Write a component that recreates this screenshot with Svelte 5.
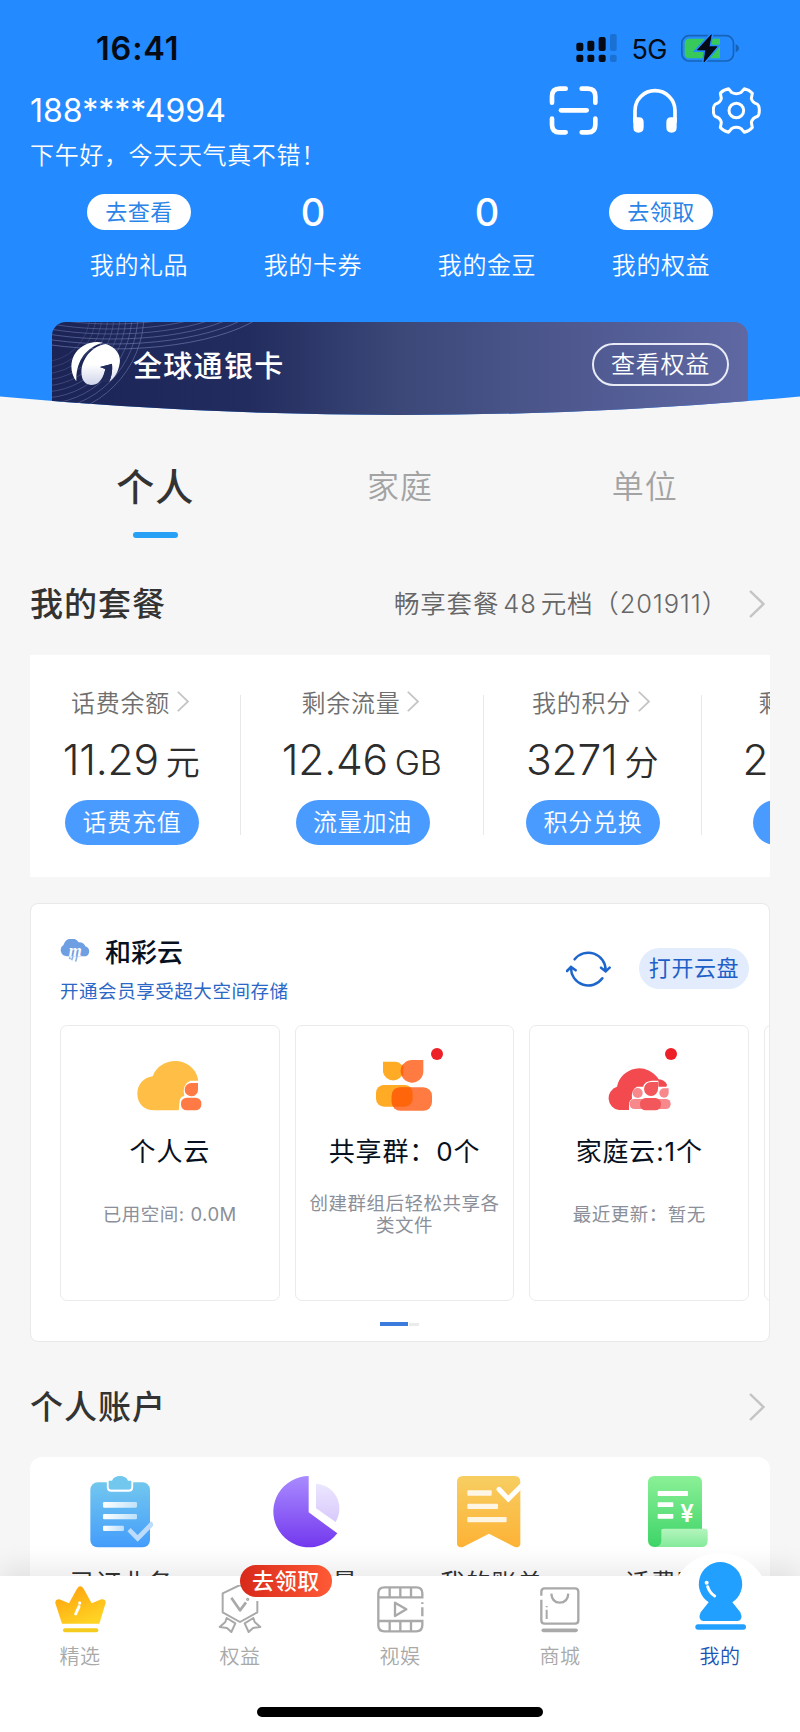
<script lang="ts">
    type Stat = { label: string; count?: number; action?: string };
    type Usage = { title: string; value: string; unit: string; action: string; width: number };
    type Cloud = { icon: string; title: string; note: string; dot: boolean };

    const stats: Stat[] = [
        { label: '我的礼品', action: '去查看' },
        { label: '我的卡券', count: 0 },
        { label: '我的金豆', count: 0 },
        { label: '我的权益', action: '去领取' }
    ];

    const tabs = ['个人', '家庭', '单位'];
    let activeTab = $state(0);

    const usages: Usage[] = [
        { title: '话费余额', value: '11.29', unit: '元', action: '话费充值', width: 218 },
        { title: '剩余流量', value: '12.46', unit: 'GB', action: '流量加油', width: 243 },
        { title: '我的积分', value: '3271', unit: '分', action: '积分兑换', width: 218 },
        { title: '剩余语音', value: '200', unit: '分钟', action: '语音加油', width: 235 }
    ];

    const clouds: Cloud[] = [
        { icon: 'personal', title: '个人云', note: '已用空间: 0.0M', dot: false },
        { icon: 'group', title: '共享群：0个', note: '创建群组后轻松共享各类文件', dot: true },
        { icon: 'family', title: '家庭云:1个', note: '最近更新：暂无', dot: true }
    ];

    const accounts = [
        { icon: 'orders', label: '已订业务' },
        { icon: 'remain', label: '套餐余量' },
        { icon: 'bill', label: '我的账单' },
        { icon: 'invoice', label: '话费账单' }
    ];

    const navs = [
        { icon: 'crown', label: '精选' },
        { icon: 'medal', label: '权益', badge: '去领取' },
        { icon: 'film', label: '视娱' },
        { icon: 'bag', label: '商城' },
        { icon: 'me', label: '我的', active: true }
    ];

    const rings = [0, 1, 2, 3, 4, 5, 6, 7, 8, 9];
</script>

{#snippet chevron(w: number, h: number)}
    <svg class="chevron" width={w} height={h} viewBox="0 0 15 28" preserveAspectRatio="none">
        <path d="M1 1 L13.5 14 L1 27" fill="none" stroke="#c4c4c4" stroke-width="2.4" />
    </svg>
{/snippet}

<div class="page">
    <header class="header">
        <div class="status">
            <span class="time">16:41</span>
            <div class="status-right">
                <svg width="41" height="29" viewBox="0 0 123 87">
                    <g fill="#050a14">
                        <rect x="1" y="26" width="21" height="25" rx="6" />
                        <rect x="34" y="20" width="21" height="31" rx="6" />
                        <rect x="68" y="9" width="21" height="42" rx="6" />
                        <rect x="1" y="62" width="21" height="22" rx="6" />
                        <rect x="34" y="62" width="21" height="22" rx="6" />
                        <rect x="68" y="62" width="21" height="22" rx="6" />
                    </g>
                    <g fill="#1b70d3">
                        <rect x="102" y="0" width="20" height="51" rx="6" />
                        <rect x="102" y="62" width="20" height="22" rx="6" />
                    </g>
                </svg>
                <span class="network">5G</span>
                <svg width="58" height="29" viewBox="0 0 174 87">
                    <rect x="2.500" y="5" width="155" height="76" rx="22" fill="none" stroke="#1763b8" stroke-width="5" />
                    <path d="M164 31 Q174 35 174 43 Q174 51 164 55Z" fill="#1763b8" />
                    <path d="M25 14 H117 V73 H25 Q11 73 11 59 V28 Q11 14 25 14Z" fill="#37c95a" />
                    <path d="M91 2 L49 48 H74 L69 84 L108 38 H84Z" fill="#050a14" stroke="#248aff" stroke-width="12" paint-order="stroke" />
                    <path d="M91 2 L49 48 H74 L69 84 L108 38 H84Z" fill="#050a14" stroke="#050a14" stroke-width="2" stroke-linejoin="round" />
                </svg>
            </div>
        </div>

        <div class="user">
            <div class="user-text">
                <div class="phone">188****4994</div>
                <div class="greeting">下午好，今天天气真不错！</div>
            </div>
            <div class="tools">
                <svg width="49" height="49" viewBox="0 0 147 147" fill="none" stroke="#fff" stroke-width="14" stroke-linecap="round">
                    <path d="M9 50 V31 Q9 8 32 8 H50 M98 8 H116 Q139 8 139 31 V50 M139 98 V116 Q139 139 116 139 H98 M50 139 H32 Q9 139 9 116 V98" />
                    <path d="M36 73 H113" />
                </svg>
                <svg width="44" height="46" viewBox="0 0 132 138">
                    <path d="M6 104 V68 A60 60 0 0 1 126 68 V104" fill="none" stroke="#fff" stroke-width="11" />
                    <path d="M1 88 H18 Q32 88 32 103 V118 Q32 134 16 134 Q1 134 1 118Z M131 88 H114 Q100 88 100 103 V118 Q100 134 116 134 Q131 134 131 118Z" fill="#fff" />
                </svg>
                <svg width="49" height="47" viewBox="0 0 147 140" fill="none" stroke="#fff" stroke-width="9" stroke-linejoin="round">
                    <path d="M50 5 L59 16 Q73 23 87 16 L97 5 Q112 8 121 18 L118 34 Q121 47 136 51 Q142 55 142 70 Q142 84 136 88 Q121 92 118 106 L121 121 Q112 132 97 135 L87 124 Q73 117 59 124 L50 135 Q34 132 25 121 L28 106 Q25 92 10 88 Q4 84 4 70 Q4 55 10 51 Q25 47 28 34 L25 18 Q34 8 50 5Z" />
                    <circle cx="73" cy="70" r="22" />
                </svg>
            </div>
        </div>

        <div class="stats">
            {#each stats as stat}
                <div class="stat">
                    <div class="stat-top">
                        {#if stat.action}
                            <button class="stat-pill">{stat.action}</button>
                        {:else}
                            <span class="stat-count">{stat.count}</span>
                        {/if}
                    </div>
                    <div class="stat-label">{stat.label}</div>
                </div>
            {/each}
        </div>

        <div class="bank">
            <svg class="bank-lines" width="260" height="94" viewBox="0 0 260 94" fill="none" stroke="#7684bb" stroke-width="1">
                {#each rings as i}
                    <circle cx="-10" cy="-8" r={48 + i * 6} opacity={0.25 + i * 0.03} />
                    <ellipse cx="60" cy="-30" rx={165 - i * 11} ry={57 - i * 5} opacity={0.6 - i * 0.03} />
                {/each}
            </svg>
            <div class="bank-row">
                <svg width="49" height="44" viewBox="0 0 147 132">
                    <defs>
                        <linearGradient id="logo" x1="0" y1="0" x2="0" y2="1">
                            <stop offset="0.5" stop-color="#fff" />
                            <stop offset="1" stop-color="#cfd4ea" />
                        </linearGradient>
                    </defs>
                    <path d="M16 118 C-8 86 -4 36 36 12 C54 0 78 -2 96 2 C50 14 14 52 16 118Z" fill="#fff" />
                    <path d="M32 100 C26 58 60 12 104 6 C138 16 150 42 146 64 C142 90 132 108 114 120 C122 104 125 86 123 66 L86 75 L103 81 C99 98 92 115 80 124 C62 134 36 130 32 100Z" fill="url(#logo)" />
                    <path d="M88 75 L123 65 C125 86 122 104 114 120 L88 122 C97 110 101 94 103 81Z" fill="#222b5e" />
                </svg>
                <span class="bank-name">全球通银卡</span>
                <button class="bank-button">查看权益</button>
            </div>
        </div>
    </header>

    <main class="content">
        <nav class="tabs">
            {#each tabs as tab, i}
                <button class="tab" class:active={activeTab === i} onclick={() => (activeTab = i)}>{tab}</button>
            {/each}
        </nav>

        <div class="section-head">
            <h2>我的套餐</h2>
            <span class="plan">畅享套餐 48 元档（201911）</span>
            {@render chevron(16, 28)}
        </div>

        <section class="usages">
            {#each usages as usage}
                <div class="usage" style="width: {usage.width}px">
                    <div class="usage-title">{usage.title}{@render chevron(12, 21)}</div>
                    <div class="usage-value">
                        <span class="number">{usage.value}</span>
                        <span class="unit">{usage.unit}</span>
                    </div>
                    <button class="usage-button">{usage.action}</button>
                </div>
            {/each}
        </section>

        <section class="cloud">
            <div class="cloud-head">
                <div class="cloud-text">
                    <div class="cloud-title">
                        <svg width="31" height="24" viewBox="0 0 93 72">
                            <path d="M20 52 A19 19 0 0 1 11 17 A25 25 0 0 1 56 10 A20 20 0 0 1 76 22 A16 16 0 0 1 78 52Z" fill="#6f9fe3" />
                            <text x="26" y="52" font-family="Liberation Serif" font-style="italic" font-weight="bold" font-size="50" fill="#fff">m</text>
                            <path d="M52 48 L47 68 M27 56 L32 59 M39 52 L35 64" stroke="#8db4ea" stroke-width="5" />
                        </svg>
                        <span>和彩云</span>
                    </div>
                    <div class="cloud-sub">开通会员享受超大空间存储</div>
                </div>
                <svg class="refresh" width="45" height="37" viewBox="0 0 135 111" fill="none" stroke="#1f66cc" stroke-width="7.500" stroke-linecap="round">
                    <path d="M26 28 A52 52 0 0 1 119 60 M105 53 L119 64 L131 53" />
                    <path d="M109 85 A52 52 0 0 1 15 52 M3 63 L15 51 L29 61" />
                </svg>
                <button class="open">打开云盘</button>
            </div>

            <div class="cloud-cards">
                {#each clouds as cloud}
                    <div class="cloud-card">
                        <div class="cloud-icon">
                            {#if cloud.icon === 'personal'}
                                <svg width="66" height="50" viewBox="0 0 198 150">
                                    <path d="M56 148 C24 148 4 127 4 98 C4 70 24 49 50 46 C61 16 89 0 118 0 C156 0 187 30 187 64 V148Z" fill="#ffbe45" />
                                    <path d="M128 150 L131 118 Q133 108 145 104 Q137 70 163 59 H198 V150Z" fill="#fff" />
                                    <path d="M186 66 V84 A20 20 0 1 1 166 66Z" fill="#ff7a45" />
                                    <rect x="135" y="110" width="61" height="38" rx="17" fill="#ff7a45" />
                                </svg>
                            {:else if cloud.icon === 'group'}
                                <svg width="56" height="51" viewBox="0 0 168 153">
                                    <path d="M21 5 H60 Q82 8 82 36 A31 31 0 0 1 21 36Z" fill="#ffab26" />
                                    <rect x="0" y="75" width="110" height="65" rx="24" fill="#ffab26" />
                                    <path d="M142 0 V36 A34 34 0 1 1 108 0Z" fill="#ff7b42" />
                                    <rect x="47" y="82" width="121" height="70" rx="26" fill="#ff7b42" />
                                    <path d="M74 36 Q74 18 82 12 V48 Q76 48 74 36Z M73 82 H102 Q110 88 110 102 V118 Q108 138 86 140 H52 Q47 134 47 126 V108 Q47 84 73 82Z" fill="#ff650a" />
                                </svg>
                            {:else}
                                <svg width="64" height="45" viewBox="0 0 192 135">
                                    <path d="M36 132 A36 36 0 0 1 30 62 A68 68 0 0 1 155 40 Q174 42 180 56 L178 64 L66 132Z" fill="#f24a4f" />
                                    <path d="M66 135 V112 Q68 102 75 98 Q72 70 90 62 H108 Q112 46 134 44 H154 V62 H192 V135Z" fill="#fff" />
                                    <circle cx="92" cy="81" r="15" fill="#f7898d" />
                                    <path d="M185 67 V81 A14 14 0 1 1 171 67Z" fill="#f7898d" />
                                    <rect x="68" y="99" width="60" height="30" rx="14" fill="#f7898d" />
                                    <rect x="132" y="99" width="59" height="30" rx="14" fill="#f7898d" />
                                    <path d="M153 48 V68 A21 21 0 1 1 132 48Z" fill="#f2575b" />
                                    <rect x="99" y="96" width="63" height="37" rx="17" fill="#f2575b" />
                                </svg>
                            {/if}
                            {#if cloud.dot}
                                <span class="dot"></span>
                            {/if}
                        </div>
                        <div class="cloud-name">{cloud.title}</div>
                        <div class="cloud-note">{cloud.note}</div>
                    </div>
                {/each}
                <div class="cloud-card"></div>
            </div>

            <div class="pager"><span></span><i></i></div>
        </section>

        <div class="section-head">
            <h2>个人账户</h2>
            {@render chevron(16, 28)}
        </div>

        <section class="accounts">
            {#each accounts as account}
                <div class="account">
                    <div class="account-icon {account.icon}">
                        {#if account.icon === 'orders'}
                            <svg width="63" height="72" viewBox="0 0 189 216">
                                <defs>
                                    <linearGradient id="blue" x1="0" y1="0" x2="0" y2="1">
                                        <stop offset="0" stop-color="#72c7ee" />
                                        <stop offset="1" stop-color="#449dfb" />
                                    </linearGradient>
                                    <linearGradient id="line" x1="0" y1="0" x2="1" y2="0">
                                        <stop offset="0" stop-color="#fff" />
                                        <stop offset="1" stop-color="#fff" stop-opacity="0.6" />
                                    </linearGradient>
                                </defs>
                                <rect x="1" y="19" width="179" height="195" rx="22" fill="url(#blue)" />
                                <path d="M54 12 H126 V34 Q126 44 116 44 H64 Q54 44 54 34Z" fill="#76c9ee" stroke="#fff" stroke-width="7" />
                                <path d="M56 14 H66 Q72 0 90 0 Q108 0 114 14 H124 V33 Q124 40 116 40 H64 Q56 40 56 33Z" fill="#72c7ee" />
                                <rect x="39" y="78" width="102" height="17" rx="4" fill="url(#line)" />
                                <rect x="39" y="114" width="102" height="16" rx="4" fill="url(#line)" />
                                <rect x="39" y="149" width="63" height="16" rx="4" fill="url(#line)" />
                                <path d="M122 166 L143 187 L183 146" fill="none" stroke="#bddcfb" stroke-width="14" stroke-linecap="square" />
                            </svg>
                        {:else if account.icon === 'remain'}
                            <svg width="67" height="72" viewBox="0 0 201 216">
                                <defs>
                                    <linearGradient id="violet" x1="0" y1="0" x2="0" y2="1">
                                        <stop offset="0" stop-color="#a98bff" />
                                        <stop offset="1" stop-color="#7338ee" />
                                    </linearGradient>
                                    <linearGradient id="pale" x1="0" y1="0" x2="0" y2="1">
                                        <stop offset="0" stop-color="#ece6ff" />
                                        <stop offset="1" stop-color="#d9c9fb" />
                                    </linearGradient>
                                </defs>
                                <path d="M107 0 V109 L193 172 A107 107 0 1 1 107 0Z" fill="url(#violet)" />
                                <path d="M129 23 Q178 28 195 72 Q206 104 188 138 L129 97Z" fill="url(#pale)" />
                            </svg>
                        {:else if account.icon === 'bill'}
                            <svg width="64" height="72" viewBox="0 0 192 216">
                                <defs>
                                    <linearGradient id="gold" x1="0" y1="0" x2="0" y2="1">
                                        <stop offset="0" stop-color="#f7ce62" />
                                        <stop offset="1" stop-color="#fdb235" />
                                    </linearGradient>
                                </defs>
                                <path d="M18 0 H174 Q190 0 190 18 V205 Q187 216 174 213 L96 173 L18 213 Q3 216 0 205 V18 Q0 0 18 0Z" fill="url(#gold)" />
                                <path d="M126 40 L154 69 L196 27" fill="none" stroke="#fff" stroke-width="15" stroke-linecap="round" />
                                <g fill="#fff" opacity="0.85">
                                    <rect x="31" y="43" width="73" height="16" rx="3" />
                                    <rect x="31" y="83" width="92" height="16" rx="3" />
                                    <rect x="31" y="123" width="118" height="16" rx="3" />
                                </g>
                            </svg>
                        {:else}
                            <svg width="60" height="72" viewBox="0 0 180 216">
                                <defs>
                                    <linearGradient id="green" x1="0" y1="0" x2="0" y2="1">
                                        <stop offset="0" stop-color="#8bf096" />
                                        <stop offset="1" stop-color="#3dd468" />
                                    </linearGradient>
                                    <linearGradient id="mint" x1="0" y1="0" x2="0" y2="1">
                                        <stop offset="0" stop-color="#b3f5bd" />
                                        <stop offset="1" stop-color="#84ea9a" />
                                    </linearGradient>
                                </defs>
                                <path d="M20 0 H142 Q162 0 162 20 V176 H42 V213 H20 Q0 213 0 193 V20 Q0 0 20 0Z" fill="url(#green)" />
                                <path d="M40 162 Q40 158 50 158 H172 Q179 158 179 166 V194 Q178 213 160 213 H22 Q40 211 40 192Z" fill="url(#mint)" />
                                <rect x="29" y="45" width="91" height="15" rx="2" fill="#fff" />
                                <rect x="29" y="79" width="47" height="14" rx="2" fill="#fff" />
                                <rect x="29" y="114" width="47" height="14" rx="2" fill="#fff" />
                                <text x="117" y="139" text-anchor="middle" font-family="Inter" font-weight="600" font-size="72" fill="#fff">¥</text>
                            </svg>
                        {/if}
                    </div>
                    <div class="account-label">{account.label}</div>
                </div>
            {/each}
        </section>
    </main>

    <footer class="navbar">
        <div class="navs">
            {#each navs as nav}
                <div class="nav" class:active={nav.active}>
                    <div class="nav-icon">
                        {#if nav.icon === 'crown'}
                            <svg width="51" height="47" viewBox="0 0 153 141">
                                <defs>
                                    <linearGradient id="crown" x1="0" y1="0" x2="0.6" y2="1">
                                        <stop offset="0" stop-color="#ff9d0a" />
                                        <stop offset="1" stop-color="#ffd324" />
                                    </linearGradient>
                                </defs>
                                <path d="M21 113 L1 52 Q0 40 13 40 L42 52 L66 8 Q76 -6 86 8 L110 52 L139 40 Q153 39 152 51 L133 113Z" fill="url(#crown)" />
                                <rect x="24" y="127" width="106" height="12" rx="6" fill="#f5cc1d" />
                                <path d="M72 62 L62 84 M74 50 V52" stroke="#fff" stroke-width="9" stroke-linecap="round" />
                            </svg>
                        {:else if nav.icon === 'medal'}
                            <svg width="44" height="48" viewBox="0 0 132 144" fill="none" stroke="#a9a9a9" stroke-width="6" stroke-linejoin="round">
                                <path d="M118 48 V82 L66 111 L14 82 V25 L66 0 L88 10" />
                                <path d="M40 38 L66 76 L84 52" stroke-width="8" />
                                <circle cx="89" cy="43" r="2" />
                                <path d="M26 99 L52 115 L40 141 L27 129 L5 126 L22 111Z M106 99 L80 115 L92 141 L105 129 L127 126 L110 111Z" />
                            </svg>
                        {:else if nav.icon === 'film'}
                            <svg width="47" height="47" viewBox="0 0 141 141" fill="none" stroke="#a9a9a9" stroke-width="7">
                                <path d="M136 91 V64 M136 54 V49" />
                                <path d="M4 34 H136 V22 Q136 4 118 4 H22 Q4 4 4 22 V118 Q4 136 22 136 H118 Q136 136 136 118 V105 H4" />
                                <path d="M38 5 V34 M70 5 V34 M102 5 V34 M38 105 V136 M70 105 V136 M102 105 V136" />
                                <path d="M54 50 L88 70 L54 90Z" stroke-linejoin="round" />
                            </svg>
                        {:else if nav.icon === 'bag'}
                            <svg width="40" height="46" viewBox="0 0 120 138" fill="none" stroke="#a9a9a9" stroke-width="7">
                                <path d="M4 26 V14 Q4 4 14 4 H105 Q115 4 115 14 V100 Q115 110 105 110 H14 Q4 110 4 100 V38" />
                                <path d="M34 20 Q36 47 59 47 Q83 47 85 20" />
                                <path d="M20 68 V96 M20 57 V61" stroke-width="6" />
                                <path d="M10 130 H108" stroke-width="11" stroke-linecap="round" />
                            </svg>
                        {:else}
                            <svg width="51" height="68" viewBox="0 0 153 204">
                                <path d="M76 0 A66 66 0 0 1 112 121 L136 151 Q146 175 128 177 H25 Q7 175 17 151 L41 121 A66 66 0 0 1 76 0Z" fill="#21a0ff" />
                                <rect x="1" y="187" width="152" height="16" rx="8" fill="#21a0ff" />
                                <path d="M38 74 Q44 93 59 102" fill="none" stroke="#fff" stroke-width="9" stroke-linecap="round" />
                                <circle cx="35" cy="62" r="6" fill="#fff" />
                            </svg>
                        {/if}
                        {#if nav.badge}
                            <span class="nav-badge">{nav.badge}</span>
                        {/if}
                    </div>
                    <div class="nav-label">{nav.label}</div>
                </div>
            {/each}
        </div>
        <div class="home-bar"></div>
    </footer>
</div>

<style>
    :global(body) {
        margin: 0;
        background: #f6f6f6;
    }

    .page {
        display: flex;
        flex-direction: column;
        width: 800px;
        height: 1732px;
        overflow: hidden;
        background: #f6f6f6;
        color: #333;
        font-family: Inter, "Noto Sans CJK SC", sans-serif;
    }

    button {
        padding: 0;
        border: none;
        background: none;
        font-family: inherit;
        white-space: nowrap;
    }

    svg {
        display: block;
        flex: none;
    }

    /* header */
    .header {
        flex: none;
        height: 416px;
        background: #248aff;
        color: #fff;
        clip-path: path("M0 0 H800 V396.5 Q400 433.5 0 396.5 Z");
    }

    .status {
        display: flex;
        justify-content: space-between;
        align-items: center;
        box-sizing: border-box;
        height: 80px;
        padding: 16px 61px 0 96px;
        color: #050a14;
    }

    .time {
        font-size: 32.500px;
        font-weight: 600;
        letter-spacing: 0.8px;
    }

    .status-right {
        display: flex;
        align-items: center;
    }

    .network {
        margin: 2px 14px 0 14px;
        font-size: 27px;
        letter-spacing: -0.5px;
    }

    .user {
        display: flex;
        justify-content: space-between;
        height: 88px;
        padding: 6px 39px 0 30px;
    }

    .phone {
        margin-top: 5px;
        font-size: 32px;
        line-height: 40px;
    }

    .greeting {
        margin-top: 5px;
        font-size: 24px;
        line-height: 40px;
        letter-spacing: 0.65px;
        font-weight: 350;
    }

    .tools {
        display: flex;
        align-items: center;
        gap: 35px;
        height: 49px;
    }

    .stats {
        display: flex;
        margin: 20px 52px 0;
    }

    .stat {
        flex: 1;
        text-align: center;
    }

    .stat-top {
        display: flex;
        justify-content: center;
        align-items: center;
        height: 36px;
    }

    .stat-pill {
        width: 104px;
        height: 36px;
        border-radius: 18px;
        background: #fff;
        color: #2b84e8;
        font-size: 22px;
        line-height: 36px;
        letter-spacing: 0.5px;
    }

    .stat-count {
        font-size: 38px;
        font-weight: 500;
    }

    .stat-label {
        margin-top: 16px;
        font-size: 24px;
        line-height: 40px;
        letter-spacing: 0.6px;
        font-weight: 350;
    }

    .bank {
        display: grid;
        height: 94px;
        margin: 36px 52px 0;
        border-radius: 14px 14px 0 0;
        background: linear-gradient(90deg, #1c2456 0%, #222c5e 28%, #3b4878 50%, #4f5990 75%, #5f68a2 100%);
        overflow: hidden;
    }

    .bank-lines,
    .bank-row {
        grid-area: 1 / 1;
    }

    .bank-row {
        display: flex;
        align-items: center;
        height: 84px;
        padding: 0 19px;
    }

    .bank-name {
        flex: 1;
        margin-left: 13px;
        font-size: 29px;
        font-weight: 500;
        letter-spacing: 1.3px;
    }

    .bank-button {
        box-sizing: border-box;
        width: 137px;
        height: 43px;
        border: 2px solid #e8ebf5;
        border-radius: 22px;
        color: #fff;
        font-size: 24px;
        line-height: 39px;
        letter-spacing: 0.7px;
        font-weight: 350;
    }

    /* tabs */
    .content {
        flex: 1;
        min-height: 0;
        overflow: hidden;
    }

    .tabs {
        display: flex;
        padding: 46px 33px 0;
    }

    .tab {
        display: flex;
        flex: 1;
        flex-direction: column;
        align-items: center;
        height: 76.500px;
        color: #a3a3a3;
        font-size: 32px;
        line-height: 50px;
        letter-spacing: 1px;
        font-weight: 350;
    }

    .tab.active {
        color: #333;
        font-size: 38px;
        font-weight: 500;
    }

    .tab.active::after {
        content: "";
        width: 45px;
        height: 6px;
        margin-top: 20px;
        border-radius: 3px;
        background: #27a0f5;
    }

    .section-head {
        display: flex;
        align-items: center;
        height: 60px;
        margin-top: 35.500px;
        padding: 0 35px 0 30px;
    }

    h2 {
        flex: 1;
        margin: -4px 0 0;
        font-size: 33px;
        font-weight: 500;
        letter-spacing: 1px;
    }

    .plan {
        margin: -5px 21px 0 0;
        color: #666;
        font-size: 25.500px;
        letter-spacing: 0.85px;
        word-spacing: -4px;
        font-weight: 350;
    }

    /* balances */
    .usages {
        display: flex;
        box-sizing: border-box;
        width: 740px;
        height: 222.500px;
        margin: 20.500px 30px 0;
        padding-top: 25px;
        background: #fff;
        overflow: hidden;
    }

    .usage {
        position: relative;
        left: -7px;
        display: flex;
        flex: none;
        flex-direction: column;
        align-items: center;
    }

    .usage:not(:last-child)::after {
        content: "";
        position: absolute;
        top: 15px;
        right: 0;
        width: 1.500px;
        height: 140px;
        background: #e8e8e8;
    }

    .usage-title {
        display: flex;
        align-items: center;
        gap: 7px;
        height: 44px;
        margin-right: 4px;
        color: #6f6f6f;
        font-size: 24px;
        letter-spacing: 0.7px;
        font-weight: 350;
    }

    .usage-value {
        display: flex;
        align-items: baseline;
        gap: 7px;
        height: 55px;
        margin: 8px 2px 0 0;
        color: #2d2d2d;
        line-height: 55px;
        white-space: nowrap;
    }

    .number {
        font-size: 42.500px;
        font-weight: 350;
        letter-spacing: -0.2px;
    }

    .unit {
        font-size: 34px;
        letter-spacing: -0.5px;
        font-weight: 350;
    }

    .usage-button {
        width: 134px;
        height: 45px;
        margin-top: 13.500px;
        border-radius: 23px;
        background: #4a9bff;
        color: #fff;
        font-size: 24px;
        line-height: 45px;
        letter-spacing: 0.7px;
        font-weight: 350;
    }

    /* cloud storage */
    .cloud {
        box-sizing: border-box;
        height: 438.500px;
        margin: 26px 30px 0;
        border: 1.500px solid #e9e9e9;
        border-radius: 8px;
        background: #fff;
        overflow: hidden;
    }

    .cloud-head {
        display: flex;
        height: 94px;
        padding: 27px 20px 0 29px;
    }

    .cloud-text {
        flex: 1;
    }

    .cloud-title {
        display: flex;
        align-items: center;
        gap: 14px;
        height: 40px;
        color: #071020;
        font-size: 26px;
        font-weight: 500;
    }

    .cloud-title span {
        margin-top: -2px;
    }

    .cloud-sub {
        margin-top: 2px;
        color: #2b67c6;
        font-size: 18.500px;
        line-height: 36px;
        letter-spacing: 0.55px;
    }

    .refresh {
        margin: 19px 28px 0 0;
    }

    .open {
        width: 110px;
        height: 41px;
        margin-top: 17px;
        border-radius: 21px;
        background: #e2ecfc;
        color: #1f60c8;
        font-size: 22px;
        line-height: 41px;
        letter-spacing: 0.6px;
    }

    .cloud-cards {
        display: flex;
        gap: 15px;
        padding-left: 29px;
    }

    .cloud-card {
        display: flex;
        flex: none;
        flex-direction: column;
        align-items: center;
        box-sizing: border-box;
        width: 219.700px;
        height: 276px;
        border: 1.500px solid #ebebeb;
        border-radius: 7px;
        text-align: center;
    }

    .cloud-icon {
        position: relative;
        display: flex;
        justify-content: center;
        align-items: flex-end;
        width: 100%;
        height: 85px;
    }

    .cloud-icon svg {
        margin-right: 1px;
    }

    .dot {
        position: absolute;
        top: 22px;
        left: 135px;
        width: 12px;
        height: 12px;
        border-radius: 50%;
        background: #ee2027;
    }

    .cloud-name {
        height: 40px;
        margin-top: 21px;
        color: #071020;
        font-size: 26px;
        line-height: 40px;
        letter-spacing: 0.85px;
    }

    .cloud-note {
        display: flex;
        align-items: center;
        justify-content: center;
        width: 194px;
        height: 50px;
        margin-top: 17px;
        color: #8b8f99;
        font-size: 18.500px;
        line-height: 22px;
        letter-spacing: 0.5px;
    }

    .pager {
        display: flex;
        align-items: center;
        justify-content: center;
        gap: 1px;
        margin: 21px 2px 0 0;
    }

    .pager span {
        width: 28px;
        height: 4px;
        background: #3a7bdc;
    }

    .pager i {
        width: 10px;
        height: 3px;
        background: #ebebeb;
    }

    /* account shortcuts */
    .accounts {
        display: flex;
        height: 200px;
        margin: 20px 30px 0;
        border-radius: 12px;
        background: #fff;
    }

    .account {
        display: flex;
        flex: 1;
        flex-direction: column;
        align-items: center;
        padding-top: 19px;
    }

    .account-icon.orders,
    .account-icon.remain {
        margin-right: 2px;
    }

    .account-icon.bill {
        margin-right: 8px;
    }

    .account-label {
        margin: 15px 2px 0 0;
        font-size: 25px;
        line-height: 40px;
        letter-spacing: 0.8px;
    }

    /* bottom bar */
    .navbar {
        position: relative;
        z-index: 1;
        flex: none;
        height: 156px;
        background: #fff;
        box-shadow: 0 -8px 26px rgba(0, 0, 0, 0.09);
    }

    .navs {
        display: flex;
        height: 131px;
    }

    .nav {
        position: relative;
        display: flex;
        flex: 1;
        flex-direction: column;
        align-items: center;
        color: #a9a9a9;
    }

    .nav.active {
        color: #1c55b5;
    }

    /* round bump behind the selected item */
    .nav.active::before {
        content: "";
        position: absolute;
        top: -23px;
        width: 100px;
        height: 100px;
        border-radius: 50%;
        background: #fff;
    }

    .nav-icon {
        position: relative;
        display: flex;
        align-items: flex-end;
        height: 57px;
    }

    .nav.active .nav-icon {
        height: 54px;
        margin-bottom: 3px;
    }

    .nav-badge {
        position: absolute;
        top: -11px;
        left: 22px;
        width: 92px;
        height: 32px;
        border-radius: 16px;
        background: linear-gradient(90deg, #d8291a, #ff5a36);
        color: #fff;
        font-size: 22px;
        font-weight: 500;
        line-height: 33px;
        text-align: center;
        letter-spacing: 0.6px;
    }

    .nav-label {
        position: relative;
        margin-top: 9px;
        font-size: 20px;
        line-height: 30px;
        letter-spacing: 0.4px;
        font-weight: 350;
    }

    .home-bar {
        width: 286px;
        height: 10px;
        margin: 0 auto;
        border-radius: 5px;
        background: #000;
    }
</style>
